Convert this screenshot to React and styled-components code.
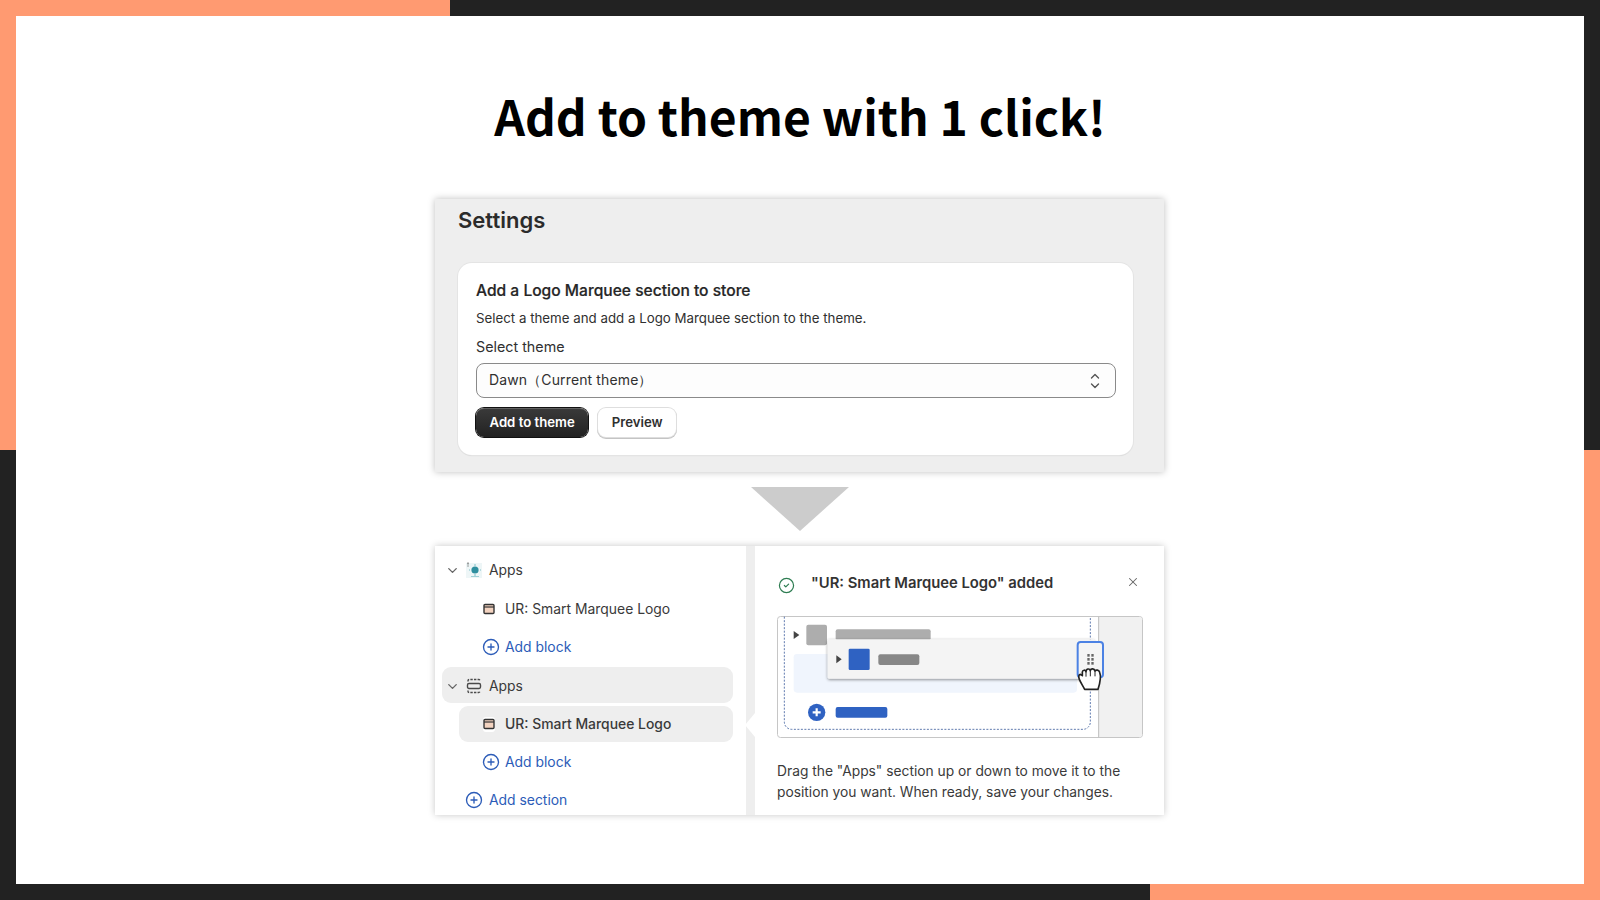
import React from "react";
import styled, { createGlobalStyle } from "styled-components";
import { ChevronDown, CirclePlus, CircleCheck, X } from "lucide-react";

const Global = createGlobalStyle`
  html, body { margin: 0; padding: 0; background: #fff; }
  * { box-sizing: border-box; }
`;

const Frame = styled.div`
  width: 1600px;
  height: 900px;
  padding: 16px;
  overflow: hidden;
  background:
    linear-gradient(#ff9a71, #ff9a71) left top / 450px 16px no-repeat,
    linear-gradient(#ff9a71, #ff9a71) left top / 16px 450px no-repeat,
    linear-gradient(#ff9a71, #ff9a71) right bottom / 16px 450px no-repeat,
    linear-gradient(#ff9a71, #ff9a71) right bottom / 450px 16px no-repeat,
    #222222;
`;

const Sheet = styled.main`
  height: 868px;
  background: #fff;
  display: flex;
  flex-direction: column;
  align-items: center;
  font-family: Inter, "Noto Sans", sans-serif;
  color: #303030;
`;

const Title = styled.h1`
  margin: 60px 0 0;
  height: 80px;
  font-family: "Noto Sans CJK JP", "Noto Sans", sans-serif;
  font-size: 48px;
  line-height: 78px;
  font-weight: 700;
  color: #000;
  white-space: nowrap;
`;

const SettingsPanel = styled.section`
  margin: 43px 1px 0 0;
  width: 729px;
  height: 273px;
  padding: 0 31px 0 23px;
  background: #eeeeee;
  box-shadow: 0 0 7px rgba(0, 0, 0, 0.26);
`;

const PanelHeading = styled.h2`
  margin: 0;
  height: 64px;
  padding-top: 8px;
  font-size: 22px;
  line-height: 26px;
  font-weight: 600;
  color: #2b2b2b;
`;

const Card = styled.div`
  height: 192px;
  padding: 19px 17px 0 18px;
  background: #fff;
  border-radius: 14px;
  box-shadow: 0 0 0 1px #e4e4e4, 0 1px 1px rgba(0, 0, 0, 0.12);
`;

const CardTitle = styled.h3`
  margin: 0;
  font-size: 15.6px;
  line-height: 18px;
  font-weight: 500;
  -webkit-text-stroke: 0.2px #262626;
  color: #262626;
`;

const CardText = styled.p`
  margin: 9px 0 0;
  font-size: 13.3px;
  line-height: 18px;
  color: #303030;
`;

const FieldLabel = styled.div`
  margin-top: 11px;
  font-size: 14.3px;
  line-height: 18px;
  color: #303030;
`;

const Select = styled.div`
  margin-top: 7px;
  height: 35px;
  padding: 0 15px 0 12px;
  display: flex;
  align-items: center;
  justify-content: space-between;
  border: 1px solid #8a8a8a;
  border-radius: 8px;
  background: #fdfdfd;
  font-size: 14px;
  letter-spacing: 0.13px;
  color: #303030;
`;

const ButtonRow = styled.div`
  margin-top: 10px;
  display: flex;
  gap: 10px;
`;

const Button = styled.div`
  height: 29px;
  padding: 0 13.5px 2px;
  display: flex;
  align-items: center;
  border-radius: 8px;
  font-size: 13.2px;
  font-weight: 600;
  background: ${(p) => (p.$primary ? "linear-gradient(#3a3a3a, #222)" : "#fff")};
  color: ${(p) => (p.$primary ? "#fff" : "#303030")};
  box-shadow: ${(p) =>
    p.$primary
      ? "0 0 0 1px #111, inset 0 1px 0 rgba(255,255,255,.2)"
      : "0 0 0 1px #dedede, 0 1px 0 1px #c4c4c4"};
`;

const ArrowDown = styled.div`
  margin-top: 15px;
  width: 0;
  height: 0;
  border-left: 49px solid transparent;
  border-right: 49px solid transparent;
  border-top: 44px solid #cccccc;
`;

const EditorPanel = styled.section`
  margin: 15px 1px 0 0;
  width: 729px;
  height: 269px;
  display: flex;
  background: #fff;
  box-shadow: 0 0 7px rgba(0, 0, 0, 0.22);
  overflow: hidden;
`;

const Sidebar = styled.div`
  width: 313px;
  padding: 5px 13px 0 7px;
  display: flex;
  flex-direction: column;
`;

const Row = styled.div`
  height: 36px;
  margin-top: ${(p) => p.$mt || 0}px;
  margin-left: ${(p) => p.$indent || 0}px;
  padding-left: ${(p) => p.$pad || 0}px;
  padding-top: ${(p) => (p.$flat ? 0 : 2)}px;
  display: flex;
  align-items: center;
  flex-shrink: 0;
  border-radius: 9px;
  font-size: 13.9px;
  font-weight: ${(p) => (p.$strong ? 500 : 400)};
  background: ${(p) => (p.$active ? "#eeeeee" : "transparent")};
  color: ${(p) => (p.$link ? "#2c5cb8" : "#3a3a3a")};
`;

const IconSlot = styled.span`
  width: ${(p) => p.$w || 20}px;
  margin-right: ${(p) => p.$gap || 0}px;
  display: flex;
  align-items: center;
  justify-content: center;
  flex-shrink: 0;
`;

const Gutter = styled.div`
  position: relative;
  width: 9px;
  flex-shrink: 0;
  background: #eeeeee;
`;

const Notch = styled.span`
  position: absolute;
  right: 0;
  top: 167px;
  width: 0;
  height: 0;
  border-top: 12px solid transparent;
  border-bottom: 12px solid transparent;
  border-right: 10px solid #fff;
`;

const Detail = styled.div`
  flex: 1;
  padding: 0 21px 0 22px;
  display: flex;
  flex-direction: column;
`;

const DetailHead = styled.div`
  height: 70px;
  padding-top: 25px;
  display: flex;
  align-items: flex-start;
`;

const CheckSlot = styled.span`
  width: 34px;
  padding: 6px 0 0 1px;
  display: flex;
  color: #2e7d52;
  flex-shrink: 0;
`;

const DetailTitle = styled.div`
  flex: 1;
  font-size: 14.8px;
  line-height: 24px;
  font-weight: 600;
  color: #333;
`;

const CloseSlot = styled.span`
  margin-top: 4px;
  margin-right: 3px;
  display: flex;
  color: #666;
`;

const Illustration = styled.svg`
  display: block;
  width: 366px;
  height: 122px;
  flex-shrink: 0;
`;

const HelpText = styled.p`
  margin: 23px 0 0;
  font-size: 13.8px;
  line-height: 21px;
  color: #3a3a3a;
  white-space: nowrap;
`;

const UpDownIcon = () => (
  <svg width="10" height="16" viewBox="0 0 10 16" fill="none" stroke="#555" strokeWidth="1.4" strokeLinecap="round" strokeLinejoin="round">
    <path d="M1.5 5L5 1.5 8.5 5" />
    <path d="M1.5 11L5 14.5 8.5 11" />
  </svg>
);

const BlockIcon = () => (
  <svg width="12" height="12" viewBox="0 0 12 12">
    <rect x="1" y="1.5" width="10" height="9" rx="1" fill="#f3d3c0" stroke="#333" strokeWidth="1.4" />
    <path d="M1 4h10" stroke="#333" strokeWidth="1.2" />
  </svg>
);

const ActiveBlockIcon = styled.span`
  width: 15px;
  height: 15px;
  background: #fff;
  border-radius: 3px;
  display: flex;
  align-items: center;
  justify-content: center;
`;

const SectionIcon = () => (
  <svg width="16" height="16" viewBox="0 0 16 16" fill="none" stroke="#4a4a4a" strokeWidth="1.4">
    <path d="M2 3.5V2.8A1.3 1.3 0 0 1 3.3 1.5h9.4A1.3 1.3 0 0 1 14 2.8v.7" strokeDasharray="2.4 1.2" />
    <rect x="1.5" y="5.5" width="13" height="5" rx="1.4" />
    <path d="M2 12.5v.7a1.3 1.3 0 0 0 1.3 1.3h9.4a1.3 1.3 0 0 0 1.3-1.3v-.7" strokeDasharray="2.4 1.2" />
  </svg>
);

const AppIcon = () => (
  <svg width="18" height="18" viewBox="0 0 18 18">
    <rect x="1" y="2" width="16" height="15" fill="#eef6f7" />
    <circle cx="10" cy="9" r="3.6" fill="#2f8f9f" />
    <path d="M10 3v2M10 13v2M5 9H4M16 9h-1" stroke="#7cc0c9" strokeWidth="1" />
    <path d="M3 1.5v4" stroke="#444" strokeWidth="1" strokeDasharray="2 1" />
    <path d="M6 15.5h8" stroke="#9fd0d6" strokeWidth="1" />
  </svg>
);

const DragIllustration = () => (
  <Illustration viewBox="80 228 1098 366">
    <defs>
      <filter id="cardShadow" x="-5%" y="-20%" width="110%" height="150%">
        <feDropShadow dx="0" dy="3" stdDeviation="4" floodColor="#000" floodOpacity="0.45" />
      </filter>
    </defs>
    <rect x="81.5" y="229.5" width="1095" height="363" rx="9" fill="#fff" stroke="#c6c6c6" strokeWidth="3" />
    <path d="M1045 231V591H1167a8 8 0 0 0 8-8V239a8 8 0 0 0-8-8Z" fill="#f1f1f1" />
    <path d="M1045 230V592" stroke="#bdbdbd" strokeWidth="3" />
    <path d="M102 230V546a22 22 0 0 0 22 22H998a22 22 0 0 0 22-22V230" fill="none" stroke="#40609f" strokeWidth="2.5" strokeDasharray="6 4.5" />
    <path d="M130 273l17 12-17 12Z" fill="#444" />
    <rect x="168" y="254" width="62" height="62" rx="6" fill="#adadad" />
    <rect x="256" y="268" width="285" height="33" rx="6" fill="#adadad" />
    <rect x="130" y="342" width="850" height="116" rx="10" fill="#f0f5fd" />
    <rect x="232" y="298" width="800" height="118" rx="5" fill="#f4f4f4" filter="url(#cardShadow)" />
    <rect x="982" y="306" width="76" height="106" rx="9" fill="#f4f4f4" stroke="#4c82e4" strokeWidth="6" />
    <path d="M258 346l16 12-16 12Z" fill="#444" />
    <rect x="295" y="326" width="63" height="64" rx="4" fill="#2f62c2" />
    <rect x="384" y="343" width="123" height="32" rx="6" fill="#878787" />
    {[346, 358, 370].map((y) => (
      <g key={y} fill="#666">
        <rect x="1011" y={y - 4} width="7" height="8" />
        <rect x="1023" y={y - 4} width="7" height="8" />
      </g>
    ))}
    <path
      d="M1003 448C997 436 991 428 987 418C984 410 985 404 990 403L996 407V396C997 389 1005 389 1007 395C1008 385 1018 385 1020 392C1022 384 1032 385 1034 393C1037 388 1046 390 1048 397C1052 408 1051 424 1043 448Z"
      fill="#fff"
      stroke="#222"
      strokeWidth="5"
      strokeLinejoin="round"
    />
    <path d="M1007 396v14M1020 392v17M1034 393v16" stroke="#222" strokeWidth="3" />
    <circle cx="199" cy="517" r="26" fill="#2f62c2" />
    <path d="M199 505v24M187 517h24" stroke="#fff" strokeWidth="6.5" />
    <rect x="256" y="501" width="155" height="32" rx="6" fill="#2f62c2" />
  </Illustration>
);

export default function App() {
  return (
    <>
      <Global />
      <Frame>
        <Sheet>
          <Title>Add to theme with 1 click!</Title>
          <SettingsPanel>
            <PanelHeading>Settings</PanelHeading>
            <Card>
              <CardTitle>Add a Logo Marquee section to store</CardTitle>
              <CardText>Select a theme and add a Logo Marquee section to the theme.</CardText>
              <FieldLabel>Select theme</FieldLabel>
              <Select>
                <span>Dawn（Current theme）</span>
                <UpDownIcon />
              </Select>
              <ButtonRow>
                <Button $primary>Add to theme</Button>
                <Button>Preview</Button>
              </ButtonRow>
            </Card>
          </SettingsPanel>
          <ArrowDown />
          <EditorPanel>
            <Sidebar>
              <Row>
                <IconSlot $w={20} $gap={3}><ChevronDown size={15} color="#666" strokeWidth={2.2} /></IconSlot>
                <IconSlot $w={18} $gap={6}><AppIcon /></IconSlot>
                Apps
              </Row>
              <Row $mt={3} $pad={41}>
                <IconSlot $w={12} $gap={10}><BlockIcon /></IconSlot>
                UR: Smart Marquee Logo
              </Row>
              <Row $mt={2} $pad={40} $link>
                <IconSlot $w={18} $gap={5}><CirclePlus size={18} strokeWidth={1.8} /></IconSlot>
                Add block
              </Row>
              <Row $mt={3} $active>
                <IconSlot $w={20} $gap={3}><ChevronDown size={15} color="#666" strokeWidth={2.2} /></IconSlot>
                <IconSlot $w={18} $gap={6}><SectionIcon /></IconSlot>
                Apps
              </Row>
              <Row $mt={3} $indent={17} $pad={24} $flat $active $strong>
                <IconSlot $w={12} $gap={10}><ActiveBlockIcon><BlockIcon /></ActiveBlockIcon></IconSlot>
                UR: Smart Marquee Logo
              </Row>
              <Row $mt={1} $pad={40} $link>
                <IconSlot $w={18} $gap={5}><CirclePlus size={18} strokeWidth={1.8} /></IconSlot>
                Add block
              </Row>
              <Row $mt={2} $pad={23} $link>
                <IconSlot $w={18} $gap={6}><CirclePlus size={18} strokeWidth={1.8} /></IconSlot>
                Add section
              </Row>
            </Sidebar>
            <Gutter><Notch /></Gutter>
            <Detail>
              <DetailHead>
                <CheckSlot><CircleCheck size={17} strokeWidth={1.7} /></CheckSlot>
                <DetailTitle>"UR: Smart Marquee Logo" added</DetailTitle>
                <CloseSlot><X size={14} strokeWidth={1.8} /></CloseSlot>
              </DetailHead>
              <DragIllustration />
              <HelpText>
                Drag the "Apps" section up or down to move it to the
                <br />
                position you want. When ready, save your changes.
              </HelpText>
            </Detail>
          </EditorPanel>
        </Sheet>
      </Frame>
    </>
  );
}
